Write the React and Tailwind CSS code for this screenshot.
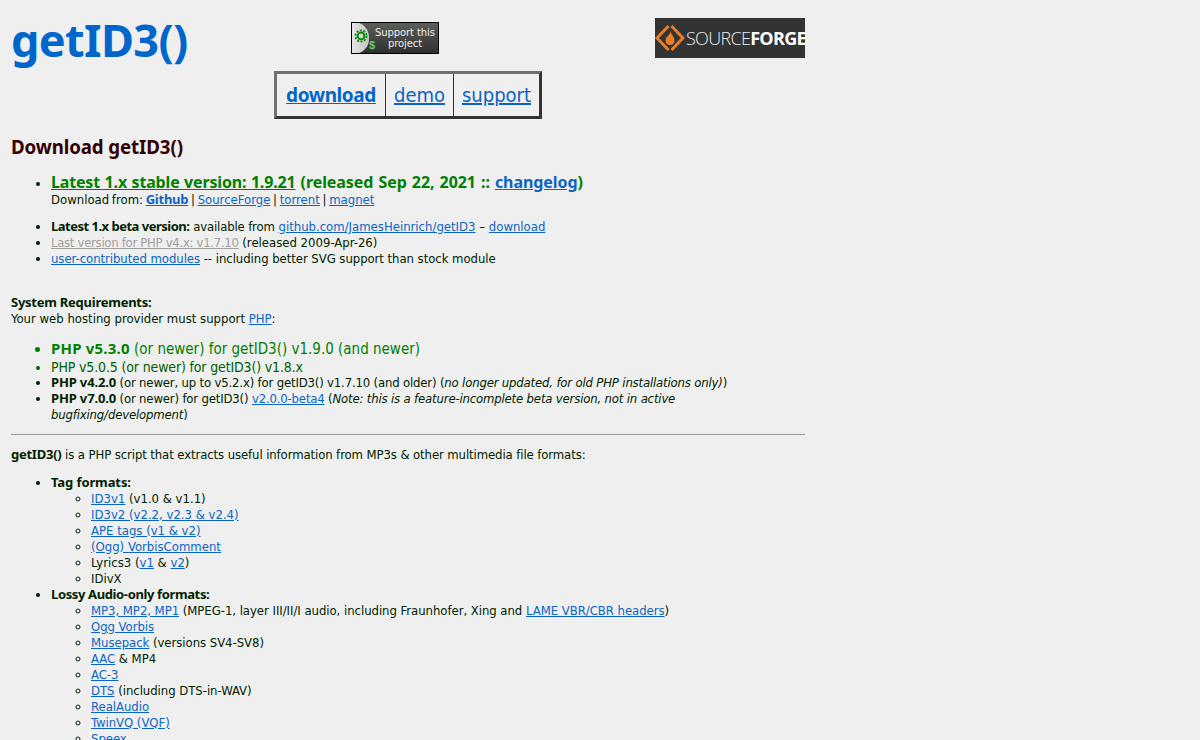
import React from 'react'

const A = ({ children, className = '' }) => (
  <a href="#" className={`text-[#0c64c4] underline ${className}`}>{children}</a>
)

const B = ({ children, className = 'tracking-[-0.25px]' }) => (
  <b className={`font-['Noto_Sans',sans-serif] leading-[12px] ${className}`}>{children}</b>
)

const Sub = ({ children }) => <li className="list-[circle]">{children}</li>

function SupportBadge() {
  return (
    <div className="relative flex h-[32px] w-[88px] items-center justify-end overflow-hidden border border-black bg-gradient-to-b from-[#5c5e5c] to-[#2f312f]">
      <div className="absolute left-[-13px] top-[-1px] h-[32px] w-[30px] rounded-full bg-gradient-to-r from-[#ffffff] to-[#c4c4c4]" />
      <svg className="absolute left-[2px] top-[6px]" width="14" height="14" viewBox="0 0 14 14">
        <circle cx="7" cy="7" r="3.4" fill="none" stroke="#0a8a0a" strokeWidth="2" />
        <circle cx="7" cy="7" r="5.6" fill="none" stroke="#0a8a0a" strokeWidth="1.8" strokeDasharray="2 1.5" />
      </svg>
      <span className="absolute left-[17px] top-[16px] font-['Liberation_Sans',sans-serif] text-[11px] font-bold leading-[12px] text-[#66cc66]">$</span>
      <span className="w-[66px] text-center font-['DejaVu_Sans',sans-serif] text-[10px] leading-[11px] tracking-[-0.1px] text-[#ececec] [font-stretch:normal]">
        Support this project
      </span>
    </div>
  )
}

function SourceForgeLogo() {
  return (
    <div className="flex h-[40px] w-[150px] items-center overflow-hidden bg-[#333333]">
      <svg width="30" height="30" viewBox="0 0 30 30" className="shrink-0">
        <path d="M13.5 3 L2 15 L13.5 27 M16.5 3 L28 15 L16.5 27" fill="none" stroke="#ea7b28" strokeWidth="3" />
        <path d="M15.5 8 C15.5 12 10.5 13.5 10.5 17.5 C10.5 20.5 12.5 22 15 22 C17.5 22 19.5 20.5 19.5 17.5 C19.5 14 16.5 12 15.5 8 Z" fill="#ea7b28" />
      </svg>
      <span className="ml-[1px] whitespace-nowrap font-['Open_Sans',sans-serif] text-[18px] font-light tracking-[-0.7px] text-[#ececec] [font-stretch:normal]">
        SOURCE<span className="font-bold text-white">FORGE</span>
      </span>
    </div>
  )
}

export default function App() {
  return (
    <div className="h-[740px] overflow-hidden bg-[#efefef] pl-[11px] font-['DejaVu_Sans',sans-serif] text-[13px] leading-[16px] text-[#002200] [font-stretch:condensed]">
      <div className="w-[794px]">
        <div className="flex h-[71px] items-start">
          <h1 className="mt-[8px] w-[340px] font-['Noto_Sans',sans-serif] text-[45px] font-bold leading-[64px] tracking-[-0.6px] text-[#0066cc]">getID3()</h1>
          <div className="mt-[22px] w-[304px]"><SupportBadge /></div>
          <div className="mt-[18px]"><SourceForgeLogo /></div>
        </div>

        <div className="flex justify-center">
          <div className="flex h-[48px] w-[268px] border-[3px] border-t-[#707070] border-l-[#707070] border-b-[#333333] border-r-[#333333] text-[20px]">
            <div className="flex w-[109px] items-center justify-center border-r border-[#333]"><a href="#" className="font-['Noto_Sans',sans-serif] text-[19px] font-bold tracking-[-0.4px] text-[#0066cc] underline">download</a></div>
            <div className="flex w-[68px] items-center justify-center border-r border-[#333]"><A>demo</A></div>
            <div className="flex flex-1 items-center justify-center"><A>support</A></div>
          </div>
        </div>

        <h2 className="mt-[16px] font-['Noto_Sans',sans-serif] text-[18.7px] font-bold leading-[24px] tracking-[-0.1px] text-[#330000]">Download getID3()</h2>

        <ul className="mt-[13px] list-disc pl-[40px]">
          <li>
            <span className="font-['Noto_Sans',sans-serif] text-[16px] font-bold leading-[20px] tracking-[-0.07px] text-[#008000] [word-spacing:1px]">
              <a href="#" className="tracking-[-0.17px] underline [word-spacing:0.6px]">Latest 1.x stable version: 1.9.21</a> (released Sep 22, 2021 :: <A>changelog</A>)
            </span>
            <br />
            <span className="[word-spacing:-1px]">
              Download from: <a href="#" className="font-['Noto_Sans',sans-serif] font-bold leading-[12px] tracking-[-0.25px] text-[#0c64c4] underline">Github</a> | <A>SourceForge</A> | <A>torrent</A> | <A>magnet</A>
            </span>
          </li>
        </ul>

        <ul className="mt-[11px] list-disc pl-[40px]">
          <li><B className="tracking-[-0.5px]">Latest 1.x beta version:</B> <span className="tracking-[-0.15px]">available from</span> <A>github.com/JamesHeinrich/getID3</A> – <A>download</A></li>
          <li><a href="#" className="tracking-[-0.3px] text-[#a0a0a0] underline">Last version for PHP v4.x: v1.7.10</a> (released 2009-Apr-26)</li>
          <li className="tracking-[-0.05px]"><A>user-contributed modules</A> -- including better SVG support than stock module</li>
        </ul>

        <p className="mt-[28px]"><B>System Requirements:</B><br />Your web hosting provider must support <A>PHP</A>:</p>

        <ul className="mt-[12px] list-disc pl-[40px]">
          <li className="text-[15px] leading-[20px] text-[#008000]"><b className="font-['Noto_Sans',sans-serif] leading-[14px] tracking-[0.2px]">PHP v5.3.0</b> (or newer) for getID3() v1.9.0 (and newer)</li>
          <li className="text-[14px] leading-[16px] tracking-[-0.15px] text-[#006000]">PHP v5.0.5 (or newer) for getID3() v1.8.x</li>
          <li className="tracking-[-0.17px]"><B className="tracking-[-0.15px]">PHP v4.2.0</B> (or newer, up to v5.2.x) for getID3() v1.7.10 (and older) (<i>no longer updated, for old PHP installations only)</i>)</li>
          <li className="tracking-[-0.17px]"><B className="tracking-[-0.15px]">PHP v7.0.0</B> (or newer) for getID3() <A>v2.0.0-beta4</A> (<i>Note: this is a feature-incomplete beta version, not in active bugfixing/development</i>)</li>
        </ul>

        <hr className="mt-[11px] border-t border-[#999]" />

        <p className="mt-[12px] tracking-[-0.1px]"><B>getID3()</B> is a PHP script that extracts useful information from MP3s &amp; other multimedia file formats:</p>

        <ul className="mt-[12px] list-disc pl-[40px]">
          <li>
            <B className="tracking-[-0.1px]">Tag formats:</B>
            <ul className="pl-[40px]">
              <Sub><A>ID3v1</A> (v1.0 &amp; v1.1)</Sub>
              <Sub><A>ID3v2 (v2.2, v2.3 &amp; v2.4)</A></Sub>
              <Sub><A>APE tags (v1 &amp; v2)</A></Sub>
              <Sub><A>(Ogg) VorbisComment</A></Sub>
              <Sub>Lyrics3 (<A>v1</A> &amp; <A>v2</A>)</Sub>
              <Sub>IDivX</Sub>
            </ul>
          </li>
          <li>
            <B className="tracking-[-0.37px]">Lossy Audio-only formats:</B>
            <ul className="pl-[40px] tracking-[-0.04px]">
              <Sub><A>MP3, MP2, MP1</A> (MPEG-1, layer III/II/I audio, including Fraunhofer, Xing and <A>LAME VBR/CBR headers</A>)</Sub>
              <Sub><A>Ogg Vorbis</A></Sub>
              <Sub><A>Musepack</A> (versions SV4-SV8)</Sub>
              <Sub><A>AAC</A> &amp; MP4</Sub>
              <Sub><A>AC-3</A></Sub>
              <Sub><A>DTS</A> (including DTS-in-WAV)</Sub>
              <Sub><A>RealAudio</A></Sub>
              <Sub><A>TwinVQ (VQF)</A></Sub>
              <Sub><A>Speex</A></Sub>
            </ul>
          </li>
        </ul>
      </div>
    </div>
  )
}
